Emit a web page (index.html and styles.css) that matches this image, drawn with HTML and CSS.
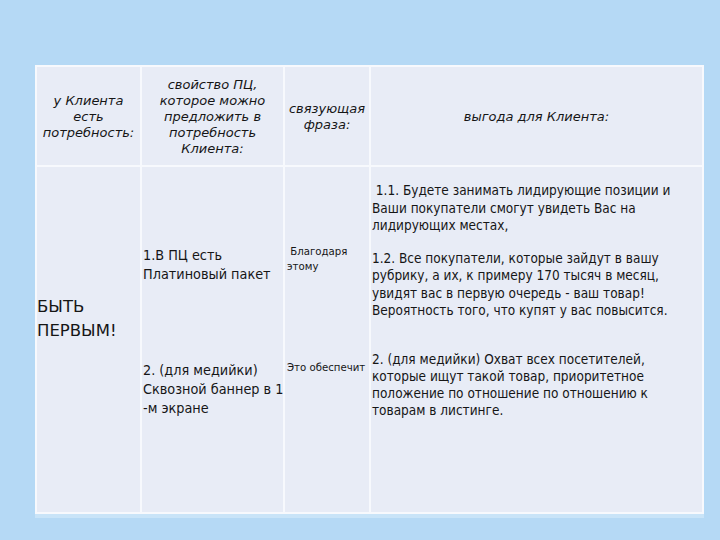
FILE: index.html
```html
<!DOCTYPE html>
<html lang="ru">
<head>
<meta charset="utf-8">
<title>Быть первым</title>
<link rel="stylesheet" href="styles.css">
</head>
<body>
<div class="slide">
  <div class="head">у Клиента<br>есть<br>потребность:</div>
  <div class="head">свойство ПЦ,<br>которое можно<br>предложить в<br>потребность<br>Клиента:</div>
  <div class="head">связующая<br>фраза:</div>
  <div class="head">выгода для Клиента:</div>

  <div class="cell need"><p>БЫТЬ<br>ПЕРВЫМ!</p></div>
  <div class="cell prop">
    <p>1.В ПЦ есть<br>Платиновый пакет</p>
    <p class="second">2. (для медийки)<br>Сквозной баннер в 1<br>-м экране</p>
  </div>
  <div class="cell link">
    <p>&nbsp;Благодаря<br>этому</p>
    <p class="second">Это обеспечит</p>
  </div>
  <div class="cell gain">
    <p>&nbsp;1.1. Будете занимать лидирующие позиции и<br>Ваши покупатели смогут увидеть Вас на<br>лидирующих местах,</p>
    <p class="p2">1.2. Все покупатели, которые зайдут в вашу<br>рубрику, а их, к примеру 170 тысяч в месяц,<br>увидят вас в первую очередь - ваш товар!<br>Вероятность того, что купят у вас повысится.</p>
    <p class="p3">2. (для медийки) Охват всех посетителей,<br>которые ищут такой товар, приоритетное<br>положение по отношение по отношению к<br>товарам в листинге.</p>
  </div>
</div>
</body>
</html>
```
FILE: styles.css
```css
html, body {
  margin: 0;
  padding: 0;
}
body {
  width: 720px;
  height: 540px;
  background: #b5d9f5;
  color: #161616;
  font-family: "DejaVu Sans Condensed", "DejaVu Sans", sans-serif;
  overflow: hidden;
}
.slide {
  margin: 65px 0 0 35px;
  width: 665px;
  height: 445px;
  border: 2px solid #f7f9fd;
  background: #f7f9fd;
  display: grid;
  grid-template-columns: 103px 141px 84px 331px;
  grid-template-rows: 98px 345px;
  gap: 2px;
  box-shadow: 0 4px 0 #c9e4f8;
}
.head {
  background: #e8ecf6;
  display: flex;
  align-items: center;
  justify-content: center;
  text-align: center;
  font-family: "DejaVu Sans", sans-serif;
  font-style: italic;
  font-size: 13px;
  line-height: 16px;
  padding-top: 1px;
  box-sizing: border-box;
}
.cell {
  background: #e8ecf6;
  box-sizing: border-box;
  white-space: nowrap;
}
.cell p {
  margin: 0;
}
.need {
  padding-top: 128px;
  font-family: "DejaVu Sans", sans-serif;
  font-size: 16.5px;
  line-height: 24px;
}
.prop {
  padding: 79px 0 0 1px;
  font-size: 14.3px;
  line-height: 19px;
}
.prop .second {
  margin-top: 77px;
}
.link {
  padding: 77px 0 0 2px;
  font-size: 11.3px;
  line-height: 15px;
}
.link .second {
  margin-top: 86px;
}
.gain {
  padding: 15px 0 0 1px;
  font-size: 13.5px;
  line-height: 17.5px;
}
.gain .p2 {
  margin-top: 15px;
}
.gain .p3 {
  margin-top: 31px;
  line-height: 17px;
}
```
